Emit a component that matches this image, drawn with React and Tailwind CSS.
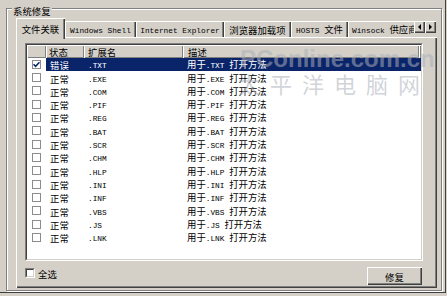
import React from "react";

function M({ t, className = "" }) {
  const parts = t.match(/[\x00-\xff]+|[^\x00-\xff]+/g) || [];
  return (
    <span className={className}>
      {parts.map((p, i) =>
        p.charCodeAt(0) < 256 ? (
          <span key={i} className="font-['Liberation_Mono',monospace] text-[7.8px] whitespace-pre">
            {p}
          </span>
        ) : (
          <span key={i} className="font-['Noto_Sans_CJK_SC',sans-serif] text-[9.4px]">
            {p}
          </span>
        )
      )}
    </span>
  );
}

const rows = [
  ["错误", ".TXT", true],
  ["正常", ".EXE"],
  ["正常", ".COM"],
  ["正常", ".PIF"],
  ["正常", ".REG"],
  ["正常", ".BAT"],
  ["正常", ".SCR"],
  ["正常", ".CHM"],
  ["正常", ".HLP"],
  ["正常", ".INI"],
  ["正常", ".INF"],
  ["正常", ".VBS"],
  ["正常", ".JS"],
  ["正常", ".LNK"],
];

const tabs = [
  ["文件关联", "w-[49px]"],
  ["Windows Shell", "w-[71px]"],
  ["Internet Explorer", "w-[88px]"],
  ["浏览器加载项", "w-[67px]"],
  ["HOSTS 文件", "w-[57px]"],
];

function Check({ checked }) {
  return (
    <div className="w-[9px] h-[9px] border border-[#8c8c8c] bg-white flex items-center justify-center">
      {checked && (
        <svg width="7" height="7" viewBox="0 0 7 7">
          <path d="M0.5 3.2 L2.6 5.3 L6.5 1.2" stroke="#0a246a" strokeWidth="1.6" fill="none" />
        </svg>
      )}
    </div>
  );
}

export default function App() {
  return (
    <div className="relative w-[447px] h-[296px] bg-[#d4d0c8] overflow-hidden leading-[12px] text-black">
      <div className="w-[446px] h-[293px] border-r border-b border-[#404040] pt-[8px] pl-[6px]">
        {/* group box */}
        <div className="relative w-[436px] h-[283px] border border-[#808080] shadow-[inset_1px_1px_#fff,1px_1px_#fff] pt-[9px] pl-[9px]">
          <div className="absolute left-[5px] top-[-6px] px-[1px] bg-[#d4d0c8]">
            <M t="系统修复" />
          </div>

          {/* tab strip */}
          <div className="relative z-10 flex items-start w-[421px] h-[21px] -mb-[2px]">
            {tabs.map(([label, w], i) =>
              i === 0 ? (
                <div
                  key={i}
                  className={`${w} h-[21px] pb-[2px] bg-[#d4d0c8] flex items-center justify-center shadow-[inset_1px_1px_#fff,inset_-1px_0_#404040,inset_-2px_0_#808080]`}
                >
                  <M t={label} />
                </div>
              ) : (
                <div
                  key={i}
                  className={`${w} mt-[3px] h-[16px] flex items-center justify-center whitespace-nowrap shadow-[inset_1px_1px_#fff,inset_-1px_0_#404040,inset_-2px_0_#808080]`}
                >
                  <M t={label} />
                </div>
              )
            )}
            <div className="w-[66px] mt-[3px] h-[16px] flex items-center pl-[4px] overflow-hidden whitespace-nowrap shadow-[inset_1px_1px_#fff]">
              <M t="Winsock 供应商" />
            </div>
            <div className="flex mt-[3px]">
              {["M4 1 L1 4 L4 7 Z", "M1 1 L4 4 L1 7 Z"].map((d, i) => (
                <div
                  key={i}
                  className="w-[11px] h-[12px] bg-[#d4d0c8] flex items-center justify-center shadow-[inset_1px_1px_#fff,inset_-1px_-1px_#404040,inset_-2px_-2px_#808080]"
                >
                  <svg width="5" height="8" viewBox="0 0 5 8">
                    <path d={d} fill="#000" />
                  </svg>
                </div>
              ))}
            </div>
          </div>

          {/* tab panel */}
          <div className="w-[421px] h-[251px] shadow-[inset_1px_1px_#fff,inset_-1px_-1px_#404040,inset_-2px_-2px_#808080] pt-[6px] pl-[9px]">
            {/* list view */}
            <div className="w-[398px] h-[218px] border border-t-[#808080] border-l-[#808080] border-r-white border-b-white">
              <div className="w-full h-full border border-t-[#404040] border-l-[#404040] border-r-[#d4d0c8] border-b-[#d4d0c8] bg-white overflow-hidden">
                {/* header */}
                <div className="flex h-[12.5px] bg-[#d4d0c8]">
                  <div className="w-[19px] shadow-[inset_1px_1px_#fff,inset_-1px_-1px_#808080]" />
                  <div className="w-[38px] pl-[3px] flex items-center shadow-[inset_1px_1px_#fff,inset_-1px_-1px_#808080]">
                    <M t="状态" />
                  </div>
                  <div className="w-[99px] pl-[4px] flex items-center shadow-[inset_1px_1px_#fff,inset_-1px_-1px_#808080]">
                    <M t="扩展名" />
                  </div>
                  <div className="w-[236px] pl-[5px] flex items-center shadow-[inset_1px_1px_#fff,inset_-1px_-1px_#808080]">
                    <M t="描述" />
                  </div>
                  <div className="flex-1 shadow-[inset_1px_1px_#fff,inset_-1px_-1px_#808080]" />
                </div>
                {/* rows */}
                {rows.map(([st, ext, sel], i) => (
                  <div key={i} className="flex h-[13.33px] items-center">
                    <div className="w-[19px] pl-[5px] flex items-center">
                      <Check checked={!!sel} />
                    </div>
                    <div
                      className={`flex-1 h-full flex items-center ${sel ? "bg-[#0a246a] text-white" : ""}`}
                    >
                      <div className="w-[38px] pl-[4px]">
                        <M t={st} />
                      </div>
                      <div className="w-[99px] pl-[4px]">
                        <M t={ext} />
                      </div>
                      <div className="pl-[4px] whitespace-nowrap">
                        <M t={`用于${ext} 打开方法`} />
                      </div>
                    </div>
                  </div>
                ))}
              </div>
            </div>

            {/* bottom row */}
            <div className="flex items-start justify-between w-[397px] mt-[6px]">
              <div className="flex items-center mt-[1px] h-[10px]">
                <div className="w-[10px] h-[10px] border border-t-[#808080] border-l-[#808080] border-r-white border-b-white">
                  <div className="w-full h-full bg-white border border-t-[#404040] border-l-[#404040] border-r-[#d4d0c8] border-b-[#d4d0c8]" />
                </div>
                <M t="全选" className="ml-[3px]" />
              </div>
              <div className="w-[55px] h-[18px] flex items-center justify-center shadow-[inset_1px_1px_#fff,inset_-1px_-1px_#404040,inset_-2px_-2px_#808080]">
                <M t="修复" />
              </div>
            </div>
          </div>
        </div>
      </div>

      {/* watermark overlay */}
      <div className="pointer-events-none absolute left-[240px] top-[47px] leading-none font-['Liberation_Sans',sans-serif] font-bold text-[24px] text-[rgba(170,175,185,0.55)] whitespace-nowrap">
        PConline.com.cn
      </div>
      <div className="pointer-events-none absolute left-[238px] top-[72px] leading-none font-['Noto_Sans_CJK_SC',sans-serif] text-[22px] tracking-[10px] text-[rgba(170,175,185,0.55)] whitespace-nowrap">
        太平洋电脑网
      </div>
    </div>
  );
}
